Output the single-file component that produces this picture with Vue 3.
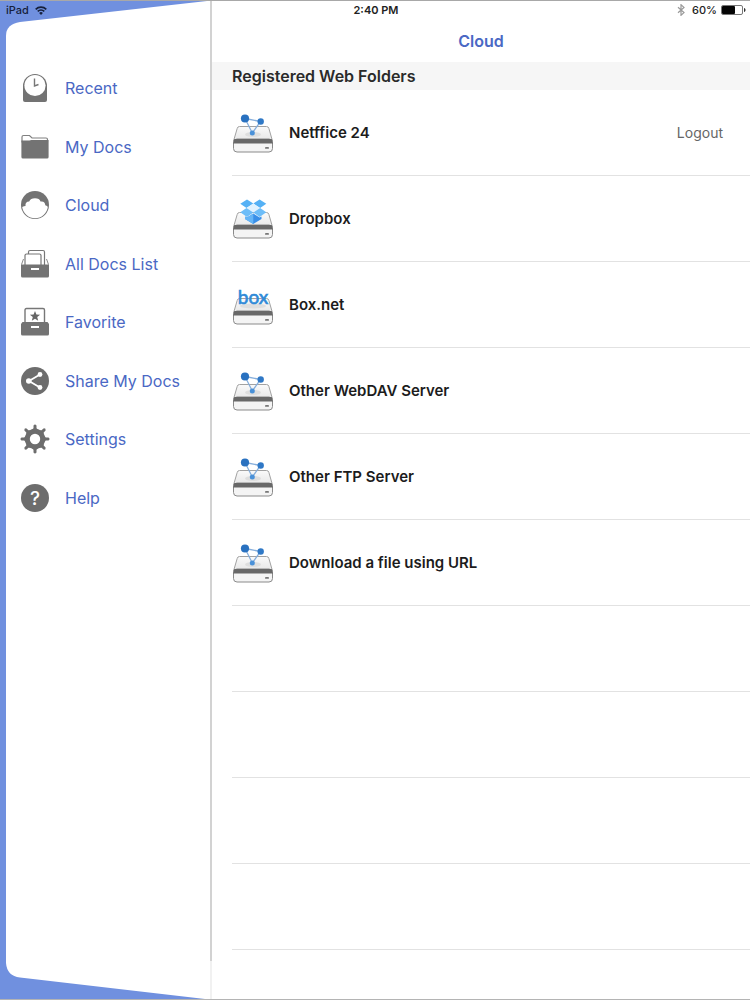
<script setup>
const menu = [
  { id: 'recent', label: 'Recent' },
  { id: 'docs', label: 'My Docs' },
  { id: 'cloud', label: 'Cloud' },
  { id: 'list', label: 'All Docs List' },
  { id: 'favorite', label: 'Favorite' },
  { id: 'share', label: 'Share My Docs' },
  { id: 'settings', label: 'Settings' },
  { id: 'help', label: 'Help' },
]

const folders = [
  { name: 'Netffice 24', icon: 'net', logout: true },
  { name: 'Dropbox', icon: 'dropbox' },
  { name: 'Box.net', icon: 'box' },
  { name: 'Other WebDAV Server', icon: 'net' },
  { name: 'Other FTP Server', icon: 'net' },
  { name: 'Download a file using URL', icon: 'net' },
]

const emptyRows = 4
const teeth = [0, 45, 90, 135, 180, 225, 270, 315]
</script>

<template>
  <div class="screen">
    <header class="status">
      <span class="device">
        iPad
        <svg width="12" height="9" viewBox="0 0 12 9" aria-hidden="true">
          <path d="M0.7 3.3a7.6 7.6 0 0 1 10.6 0" fill="none" stroke="#16203a" stroke-width="1.7" />
          <path d="M2.7 5.4a4.8 4.8 0 0 1 6.6 0" fill="none" stroke="#16203a" stroke-width="1.6" />
          <path d="M6 9 4.1 7a2.8 2.8 0 0 1 3.8 0z" fill="#16203a" />
        </svg>
      </span>
      <span class="time">2:40 PM</span>
      <span class="power">
        <svg width="8" height="12" viewBox="0 0 8 12" aria-hidden="true">
          <path d="M1 3.2 7 8.6 4 11.3V0.7l3 2.7L1 8.8" fill="none" stroke="#999" stroke-width="1.2" />
        </svg>
        <span class="percent">60%</span>
        <svg width="25" height="10" viewBox="0 0 25 10" aria-hidden="true">
          <rect x="0.5" y="0.5" width="21" height="9" rx="1.5" fill="#fff" stroke="#777" />
          <rect x="1" y="1" width="13" height="8" rx="1" fill="#050505" />
          <path d="M23 3v4c2-0.6 2-3.4 0-4z" fill="#333" />
        </svg>
      </span>
    </header>

    <aside class="sidebar">
      <svg class="cap" viewBox="0 0 210 40" preserveAspectRatio="none" aria-hidden="true">
        <path d="M6 40V35Q6 23 20 21L207 0H210V40z" fill="#fff" />
      </svg>
      <nav class="panel">
        <ul class="menu">
          <li v-for="item in menu" :key="item.id">
            <a class="link" :href="'#' + item.id">
              <svg width="30" height="30" viewBox="0 0 30 30" aria-hidden="true">
                <template v-if="item.id === 'recent'">
                  <path d="M3 13a12 12 0 0 1 24 0v14q0 2-2 2H5q-2 0-2-2z" fill="#737373" />
                  <circle cx="15" cy="12.5" r="10.6" fill="#fff" />
                  <path d="M14.5 5.5v7.5l4-1.5" fill="none" stroke="#777" stroke-width="1.4" />
                </template>
                <template v-else-if="item.id === 'docs'">
                  <path d="M2 5q0-1.500 1.500-1.500h6l2.500 2.500h14q1.500 0 1.500 1.500V10H2z" fill="#fff" stroke="#808080" stroke-width="1.200" />
                  <path d="M1.400 8.500h8l2-0.500H28.600V25q0 1.500-1.500 1.500H3q-1.600 0-1.600-1.500z" fill="#737373" />
                </template>
                <template v-else-if="item.id === 'cloud'">
                  <circle cx="15" cy="15" r="14" fill="#737373" />
                  <path d="M2.200 17Q4 16 5.500 16 5 11.500 9.200 11.500 10.500 8.300 15 8.300 19.500 8.300 20.500 11.500 25 10.800 25.300 15.200 27.500 16 27.800 17A12.900 12.900 0 0 1 2.200 17z" fill="#fff" />
                </template>
                <template v-else-if="item.id === 'list'">
                  <rect x="8.500" y="1.500" width="16" height="16" rx="1.500" fill="#fff" stroke="#777" stroke-width="1.200" />
                  <rect x="5" y="5" width="16" height="14" rx="1.500" fill="#fff" stroke="#777" stroke-width="1.200" />
                  <path d="M3.500 10 1.500 15.500M26.500 10l2 5.500" stroke="#888" />
                  <path d="M1 15.500h28V27q0 1.500-1.500 1.500h-25Q1 28.500 1 27z" fill="#737373" />
                  <rect x="11" y="19" width="8" height="2" fill="#fff" />
                </template>
                <template v-else-if="item.id === 'favorite'">
                  <path d="M5 15V3q0-1.500 1.500-1.500h16.500q1.500 0 1.500 1.500v12" fill="#fff" stroke="#777" stroke-width="1.400" />
                  <path d="m15 4 1.400 3.500 3.700.2-2.900 2.400 1 3.600-3.200-2-3.200 2 1-3.600L9.900 7.700l3.700-.2z" fill="#666" />
                  <path d="M2.500 15h25L29 17v10q0 1.500-1.500 1.500h-25Q1 28.500 1 27V17z" fill="#737373" />
                  <rect x="11" y="19" width="8" height="2" fill="#fff" />
                </template>
                <template v-else-if="item.id === 'share'">
                  <circle cx="15" cy="15" r="14" fill="#6d6d6d" />
                  <path d="M20 8.500 9 15l11 6.500" fill="none" stroke="#fff" stroke-width="1.800" />
                  <circle cx="20" cy="8.500" r="2.400" fill="#fff" />
                  <circle cx="8.800" cy="15" r="2.800" fill="#fff" />
                  <circle cx="20" cy="21.500" r="2.400" fill="#fff" />
                </template>
                <template v-else-if="item.id === 'settings'">
                  <path v-for="t in teeth" :key="t" d="M11.500 6 13.500 4.200V1.500Q15-0.600 16.500 1.500V4.200L18.500 6z" fill="#6d6d6d" :transform="`rotate(${t} 15 15)`" />
                  <circle cx="15" cy="15" r="7.700" fill="none" stroke="#6d6d6d" stroke-width="5" />
                </template>
                <template v-else>
                  <circle cx="15" cy="15" r="14" fill="#6d6d6d" />
                  <text class="mark" x="15" y="22" text-anchor="middle">?</text>
                </template>
              </svg>
              <span>{{ item.label }}</span>
            </a>
          </li>
        </ul>
      </nav>
      <svg class="cap" viewBox="0 0 210 40" preserveAspectRatio="none" aria-hidden="true">
        <path d="M6 0V4Q7 17 20 18.500L205 40H210V0z" fill="#fff" />
      </svg>
    </aside>

    <div class="divider"></div>

    <main class="content">
      <h1 class="title">Cloud</h1>
      <h2 class="section">Registered Web Folders</h2>
      <ul class="folders">
        <li v-for="folder in folders" :key="folder.name" class="row">
          <a class="folder" href="#open">
            <svg class="drive" width="42" height="42" viewBox="0 0 42 42" aria-hidden="true">
              <defs>
                <linearGradient id="lid" x1="0" y1="0" x2="0" y2="1">
                  <stop offset="0" stop-color="#fafafa" />
                  <stop offset="1" stop-color="#e6e6e6" />
                </linearGradient>
              </defs>
              <path d="M7.500 14.500h27q2 0 2.400 2L40.500 29H1.500L5.200 16.500q.4-2 2.300-2z" fill="url(#lid)" stroke="#a2a2a2" stroke-width="1" />
              <rect x="1.500" y="27" width="39" height="13" rx="3.500" fill="#f4f4f4" stroke="#8a8a8a" stroke-width="1" />
              <path d="M2.300 27h37.400l1.300 4.500H1z" fill="#686868" />
              <rect x="33" y="35" width="4" height="1.800" rx="0.900" fill="#777" />
              <template v-if="folder.icon === 'net'">
                <ellipse cx="21" cy="22.500" rx="8" ry="2.500" fill="#dedede" />
                <path d="M13 6.500 28.500 9.500 20.300 21z" fill="none" stroke="#86aedb" stroke-width="1.300" />
                <circle cx="13" cy="6.500" r="4.100" fill="#2971c0" />
                <circle cx="28.700" cy="9.500" r="3.200" fill="#2f78c6" />
                <circle cx="20.300" cy="21" r="2.500" fill="#4a91d8" />
              </template>
              <template v-else-if="folder.icon === 'dropbox'">
                <path d="M15 1.500 21.300 5.500 14.500 10 8.300 5.800zM27.600 1.500 21.300 5.500 28.100 10 34.300 5.800z" fill="#55b1f5" />
                <path d="M21.300 5.500 28.100 10 21.300 14.500 14.500 10z" fill="#e0f2ff" />
                <path d="M14.500 10 21.300 14.500 15 19 8.300 14.300zM28.100 10 34.300 14.300 27.600 19 21.300 14.500z" fill="#6dbdf8" />
                <path d="M21.300 15.500 27.600 19.500 29.500 18.500V21L21.300 26 13 21V18.500L15 19.500z" fill="#398fe8" />
                <path d="M21.300 15.500V26L13 21V18.500L15 19.500z" fill="#65b5f6" />
              </template>
              <template v-else>
                <ellipse cx="21" cy="22" rx="13" ry="2.500" fill="#dedede" />
                <text class="boxmark" x="21" y="20" text-anchor="middle">box</text>
              </template>
            </svg>
            <span>{{ folder.name }}</span>
          </a>
          <button v-if="folder.logout" class="logout" type="button">Logout</button>
        </li>
        <li v-for="n in emptyRows" :key="n" class="row" aria-hidden="true"></li>
      </ul>
    </main>
  </div>
</template>

<style>
body {
  margin: 0;
  background: #fff;
}
</style>

<style scoped>
.screen {
  position: relative;
  box-sizing: border-box;
  display: flex;
  min-height: 100vh;
  background: #7090df;
  border-top: 1px solid #a8a8a8;
  border-bottom: 1px solid #b4b4b4;
  font-family: Inter, "Liberation Sans", sans-serif;
}
ul {
  list-style: none;
  margin: 0;
  padding: 0;
}
svg {
  display: block;
  flex: none;
}
.status {
  position: absolute;
  top: 0;
  left: 0;
  right: 0;
  display: grid;
  grid-template-columns: 1fr auto 1fr;
  align-items: center;
  height: 18px;
  padding: 0 4px 0 6px;
  font-size: 11px;
  font-weight: 500;
  color: #222;
}
.device {
  display: flex;
  align-items: center;
  gap: 6px;
  color: #16203a;
}
.time {
  font-weight: 600;
}
.power {
  display: flex;
  align-items: center;
  justify-content: flex-end;
  gap: 4px;
}
.percent {
  margin-left: 3px;
}
.sidebar {
  display: flex;
  flex-direction: column;
  flex: none;
  width: 210px;
}
.cap {
  width: 100%;
  height: 40px;
}
.panel {
  flex: 1;
  margin-left: 6px;
  padding-top: 18px;
  background: #fff;
}
.menu {
  display: grid;
  grid-auto-rows: 1fr;
  height: 468px;
}
.link {
  display: flex;
  align-items: center;
  gap: 15px;
  height: 100%;
  padding-left: 14px;
  font-size: 16px;
  color: #4a68c4;
  text-decoration: none;
}
.mark {
  font: 500 19px Inter, sans-serif;
  fill: #fff;
}
.divider {
  flex: none;
  width: 2px;
  background: #f1f1f1 linear-gradient(#d2d2d2, #d2d2d2) no-repeat;
  background-size: 100% calc(100% - 38px);
}
.content {
  flex: 1;
  min-width: 0;
  background: #fff;
}
.title {
  margin: 0;
  padding-top: 19px;
  font-size: 16px;
  font-weight: 600;
  line-height: 42px;
  text-align: center;
  color: #4a68c4;
}
.section {
  margin: 0;
  padding-left: 20px;
  background: #f6f6f6;
  font-size: 16px;
  font-weight: 600;
  line-height: 28px;
  color: #2a2a2a;
}
.row {
  box-sizing: border-box;
  display: flex;
  align-items: center;
  justify-content: space-between;
  height: 86px;
  margin-left: 20px;
  padding-right: 27px;
  border-bottom: 1px solid #e2e2e2;
}
.folder {
  display: flex;
  align-items: center;
  gap: 15px;
  font-size: 15px;
  font-weight: 600;
  color: #1c1c1c;
  text-decoration: none;
}
.drive {
  overflow: visible;
}
.boxmark {
  font: 400 19px Lato, sans-serif;
  fill: #2f8ad8;
  stroke: #2f8ad8;
  stroke-width: 0.6px;
}
.logout {
  padding: 0;
  border: 0;
  background: none;
  font: 400 14px Inter, "Liberation Sans", sans-serif;
  color: #666;
}
</style>
